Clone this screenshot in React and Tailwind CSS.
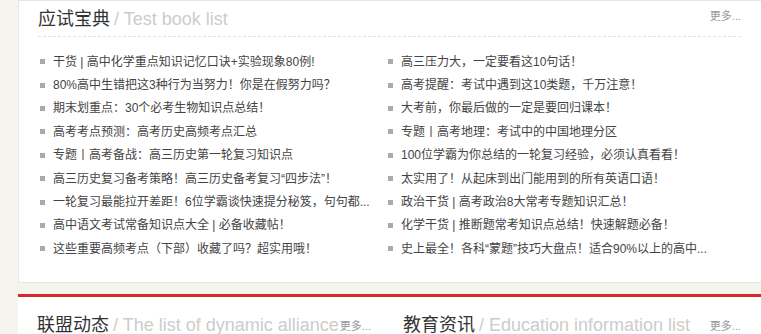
import React from "react";

const left = [
  "干货 | 高中化学重点知识记忆口诀+实验现象80例!",
  "80%高中生错把这3种行为当努力！你是在假努力吗？",
  "期末划重点：30个必考生物知识点总结！",
  "高考考点预测：高考历史高频考点汇总",
  "专题丨高考备战：高三历史第一轮复习知识点",
  "高三历史复习备考策略！高三历史备考复习“四步法”！",
  "一轮复习最能拉开差距！6位学霸谈快速提分秘笈，句句都...",
  "高中语文考试常备知识点大全 | 必备收藏帖！",
  "这些重要高频考点（下部）收藏了吗？超实用哦！",
];
const right = [
  "高三压力大，一定要看这10句话！",
  "高考提醒：考试中遇到这10类题，千万注意！",
  "大考前，你最后做的一定是要回归课本！",
  "专题丨高考地理：考试中的中国地理分区",
  "100位学霸为你总结的一轮复习经验，必须认真看看！",
  "太实用了！从起床到出门能用到的所有英语口语！",
  "政治干货 | 高考政治8大常考专题知识汇总！",
  "化学干货 | 推断题常考知识点总结！快速解题必备！",
  "史上最全！各科“蒙题”技巧大盘点！适合90%以上的高中...",
];

const font = { fontFamily: '"Liberation Sans", "Noto Sans CJK SC", sans-serif' };

function Item({ text }) {
  return (
    <li className="flex items-center h-[23.4px] text-[12px] text-[#444] whitespace-nowrap">
      <span className="w-[5px] h-[5px] bg-[#aaa] mr-[8px] shrink-0" />
      <span>{text}</span>
    </li>
  );
}

export default function App() {
  return (
    <div className="w-[761px] h-[334px] overflow-hidden bg-[#f5f4ef] pl-[18px]" style={font}>
      <div className="bg-white border border-[#e8e6e0] border-r-0 h-[283px] pl-[19px] pr-[20px] pt-[4px]">
        <div className="flex items-end h-[32px] border-b border-dashed border-[#e2e2e2] pb-[8px]">
          <span className="text-[18px] text-[#333] leading-none">应试宝典</span>
          <span className="text-[18px] text-[#ccc] leading-none ml-[4px]">/ Test book list</span>
          <span className="ml-auto text-[11px] text-[#999] leading-none mb-[6px]">更多...</span>
        </div>
        <div className="flex pt-[13px]">
          <ul className="w-[348px] pl-[2px]">
            {left.map((t) => <Item key={t} text={t} />)}
          </ul>
          <ul className="flex-1 pl-[2px]">
            {right.map((t) => <Item key={t} text={t} />)}
          </ul>
        </div>
      </div>
      <div className="mt-[11px] border-t-[3px] border-[#d7282d] bg-white h-[40px] flex pl-[19px] pt-[17px]">
        <div className="flex items-end w-[348px]">
          <span className="text-[18px] text-[#333] leading-none">联盟动态</span>
          <span className="text-[18px] text-[#ccc] leading-none ml-[4px]">/ The list of dynamic alliance</span>
          <span className="text-[11px] text-[#999] leading-none mb-[2px] ml-[1px]">更多...</span>
        </div>
        <div className="flex items-end flex-1 pl-[18px] pr-[20px]">
          <span className="text-[18px] text-[#333] leading-none">教育资讯</span>
          <span className="text-[18px] text-[#ccc] leading-none ml-[4px]">/ Education information list</span>
          <span className="ml-auto text-[11px] text-[#999] leading-none mb-[2px]">更多...</span>
        </div>
      </div>
    </div>
  );
}
